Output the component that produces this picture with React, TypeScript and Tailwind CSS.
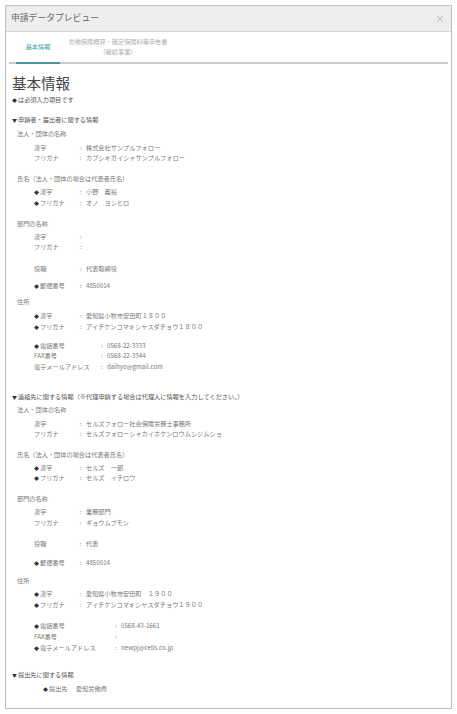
const font = { fontFamily: '"Noto Sans CJK JP", "Noto Sans", sans-serif' }

function Mark({ char = "◆" }: { char?: string }) {
  return <span className="inline-block w-[6px] text-[5px] text-[#333]">{char}</span>
}

function Heading({ children, mark = "▼", className = "" }: { children: React.ReactNode; mark?: string; className?: string }) {
  return (
    <div className={`pl-3 whitespace-nowrap text-[#555] ${className}`}>
      <Mark char={mark} />
      {children}
    </div>
  )
}

function Sub({ children, className = "" }: { children: React.ReactNode; className?: string }) {
  return <div className={`pl-[17px] ${className}`}>{children}</div>
}

function Row({
  label,
  value,
  mark,
  w = "w-[46px]",
  className = "",
}: {
  label: string
  value?: string
  mark?: boolean
  w?: string
  className?: string
}) {
  return (
    <div className={`flex pl-[34px] ${className}`}>
      <div className={`${w} shrink-0 whitespace-nowrap`}>
        {mark && <Mark />}
        {label}
      </div>
      <div className="flex whitespace-pre">
        <span className="w-[6px]">:</span>
        {value}
      </div>
    </div>
  )
}

export default function App() {
  return (
    <div className="h-[714px] bg-white pt-[5px] pl-[5px] pr-[5px]" style={font}>
      <div className="flex h-[704px] flex-col overflow-hidden border border-[#bdbdbd] bg-white text-[6.2px] leading-[10.5px] text-[#777]">
        {/* Header */}
        <div className="flex h-[26px] shrink-0 items-center justify-between border-b border-[#d4d4d4] bg-[#eeeeee] pl-[5px] pr-[4px]">
          <span className="text-[8.8px] text-[#666]">申請データプレビュー</span>
          <svg width="8" height="8" viewBox="0 0 8 8" className="mr-[3px] text-[#aaa]" aria-hidden="true">
            <path d="M1 1L7 7M7 1L1 7" stroke="currentColor" strokeWidth="0.8" />
          </svg>
        </div>

        {/* Tabs */}
        <div className="mx-[3px] flex h-[32px] shrink-0 border-b-2 border-[#cccccc] text-center">
          <div className="-mb-[2px] ml-[7px] flex w-[44px] items-center justify-center border-b-2 border-[#3a9aa8] pt-[1px] text-[#3a9aa8]">
            基本情報
          </div>
          <div className="ml-[8px] flex w-[100px] flex-col justify-center leading-[10px] text-[#b0b0b0]">
            <span className="whitespace-nowrap">労働保険概算・確定保険料等申告書</span>
            <span>（継続事業）</span>
          </div>
        </div>

        {/* Body */}
        <div className="pt-[9px]">
          <h2 className="pl-[6px] text-[14.5px] leading-[20px] text-[#444]">基本情報</h2>
          <div className="-ml-[6px] mt-[2px]">
            <Heading mark="◆">は必須入力項目です</Heading>

            <Heading className="mt-[9.5px]">申請者・届出者に関する情報</Heading>
            <Sub className="mt-[3px]">法人・団体の名称</Sub>
            <Row className="mt-[3.5px]" label="漢字" value="株式会社サンプルフォロー" />
            <Row label="フリガナ" value="カブシキガイシャサンプルフォロー" />

            <Sub className="mt-[10.5px]">氏名（法人・団体の場合は代表者氏名）</Sub>
            <Row className="mt-[2.5px]" mark label="漢字" value="小野　義裕" />
            <Row mark label="フリガナ" value="オノ　ヨシヒロ" />

            <Sub className="mt-[10.5px]">部門の名称</Sub>
            <Row className="mt-[2.5px]" label="漢字" />
            <Row label="フリガナ" />

            <Row className="mt-[11.5px]" label="役職" value="代表取締役" />
            <Row className="mt-[6.5px]" mark label="郵便番号" value="4850014" />

            <Sub className="mt-[5.5px]">住所</Sub>
            <Row className="mt-[3.5px]" mark label="漢字" value="愛知県小牧市安田町１８００" />
            <Row mark label="フリガナ" value="アイチケンコマキシヤスダチョウ１８００" />

            <Row className="mt-[8.5px]" w="w-[67px]" mark label="電話番号" value="0568-22-3333" />
            <Row w="w-[67px]" label="FAX番号" value="0568-22-3344" />
            <Row w="w-[67px]" label="電子メールアドレス" value="daihyo@gmail.com" />

            <Heading className="mt-[19.5px]">連絡先に関する情報（※代理申請する場合は代理人に情報を入力してください。）</Heading>
            <Sub className="mt-[2.5px]">法人・団体の名称</Sub>
            <Row className="mt-[3.5px]" label="漢字" value="セルズフォロー社会保険労務士事務所" />
            <Row label="フリガナ" value="セルズフォローシャカイホケンロウムシジムショ" />

            <Sub className="mt-[10px]">氏名（法人・団体の場合は代表者氏名）</Sub>
            <Row className="mt-[2.5px]" mark label="漢字" value="セルズ　一郎" />
            <Row mark label="フリガナ" value="セルズ　イチロウ" />

            <Sub className="mt-[10.5px]">部門の名称</Sub>
            <Row className="mt-[2.5px]" label="漢字" value="業務部門" />
            <Row label="フリガナ" value="ギョウムブモン" />

            <Row className="mt-[10.5px]" label="役職" value="代表" />
            <Row className="mt-[8.5px]" mark label="郵便番号" value="4850014" />

            <Sub className="mt-[7.5px]">住所</Sub>
            <Row className="mt-[3px]" mark label="漢字" value="愛知県小牧市安田町　１９００" />
            <Row mark label="フリガナ" value="アイチケンコマキシヤスダチョウ１９００" />

            <Row className="mt-[10.5px]" w="w-[81px]" mark label="電話番号" value="0568-43-1661" />
            <Row className="mt-[0.5px]" w="w-[81px]" label="FAX番号" />
            <Row className="mt-[0.5px]" w="w-[81px]" mark label="電子メールアドレス" value="newpj@cells.co.jp" />

            <Heading className="mt-[16.5px]">提出先に関する情報</Heading>
            <div className="mt-[3.5px] flex pl-[43px]">
              <span className="w-[33px] whitespace-nowrap">
                <Mark />
                提出先
              </span>
              <span>愛知労働局</span>
            </div>
          </div>
        </div>
      </div>
    </div>
  )
}
